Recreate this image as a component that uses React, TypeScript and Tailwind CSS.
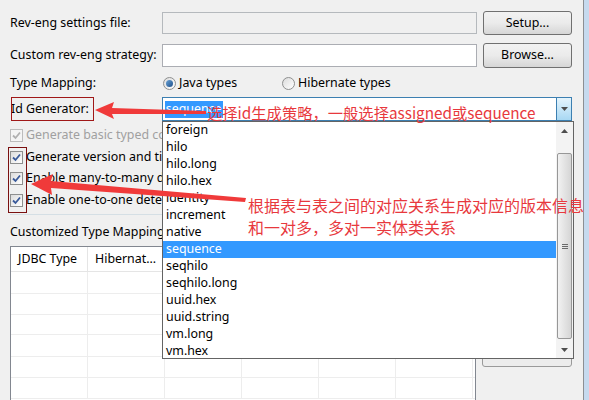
const ids = [
  'foreign',
  'hilo',
  'hilo.long',
  'hilo.hex',
  'identity',
  'increment',
  'native',
  'sequence',
  'seqhilo',
  'seqhilo.long',
  'uuid.hex',
  'uuid.string',
  'vm.long',
  'vm.hex',
]

const font = { fontFamily: '"Noto Sans", "Liberation Sans", sans-serif' }
const cjk = { fontFamily: '"Noto Sans CJK SC", "Noto Sans", sans-serif' }

function Button({ label }: { label?: string }) {
  return (
    <div className="ml-[6px] flex h-full w-[89px] items-center justify-center rounded-[3px] border border-[#707070] bg-gradient-to-b from-[#f2f2f2] via-[#ebebeb] to-[#d6d6d6] text-black">
      {label}
    </div>
  )
}

function Check({ disabled }: { disabled?: boolean }) {
  return (
    <div
      className={
        'flex h-[13px] w-[13px] shrink-0 items-center justify-center border ' +
        (disabled ? 'border-[#bcbcbc] bg-[#f4f4f4]' : 'border-[#8e8f8f] bg-gradient-to-br from-[#dcdcdc] to-white')
      }
    >
      <svg width="9" height="9" viewBox="0 0 9 9">
        <path
          d="M1 4.5 L3.5 7 L8 1.5"
          fill="none"
          stroke={disabled ? '#b0b0b0' : '#3a5a9a'}
          strokeWidth="1.8"
        />
      </svg>
    </div>
  )
}

function Radio({ on }: { on?: boolean }) {
  return (
    <div className="flex h-[13px] w-[13px] items-center justify-center rounded-full border border-[#8e8f8f] bg-gradient-to-br from-[#dcdcdc] to-white">
      {on && <div className="h-[7px] w-[7px] rounded-full bg-gradient-to-br from-[#6ba3d6] to-[#1d4f8a]" />}
    </div>
  )
}

function Arrow({ down }: { down?: boolean }) {
  return (
    <svg width="7" height="4" viewBox="0 0 7 4">
      <path d={down ? 'M0 0 L7 0 L3.5 4 Z' : 'M0 4 L7 4 L3.5 0 Z'} fill="#4d4d4d" />
    </svg>
  )
}

// check rows run under the open list, so clip them at its left edge
function CheckRow({ text, disabled, mt }: { text: string; disabled?: boolean; mt: string }) {
  return (
    <div className={'flex h-[17px] w-[152px] items-center gap-[3px] overflow-hidden whitespace-nowrap ' + mt + (disabled ? ' text-[#a0a0a0]' : '')}>
      <Check disabled={disabled} />
      <span>{text}</span>
    </div>
  )
}

export default function App() {
  return (
    <div className="relative flex h-[400px] w-[589px] overflow-hidden bg-[#f0f0f0] text-[12.4px] text-black" style={font}>
      <div className="flex w-[583px] flex-col pl-[10px] pr-[11px] pt-[11px]">
        <div className="flex h-[24px] items-center">
          <span className="w-[152px]">Rev-eng settings file:</span>
          <div className="h-[22px] w-[315px] border border-[#b5b9bd] bg-[#f0f0f0]" />
          <Button label="Setup..." />
        </div>
        <div className="mt-[8px] flex h-[25px] items-center">
          <span className="w-[152px]">Custom rev-eng strategy:</span>
          <div className="h-[23px] w-[315px] border border-[#abadb3] bg-white" />
          <Button label="Browse..." />
        </div>
        <div className="mt-[7px] flex h-[17px] items-center">
          <span className="w-[153px]">Type Mapping:</span>
          <Radio on />
          <span className="ml-[3px] w-[103px]">Java types</span>
          <Radio />
          <span className="ml-[3px]">Hibernate types</span>
        </div>
        <div className="mt-[5px] flex h-[24px] items-center">
          <span className="w-[152px] pl-[1px]">Id Generator:</span>
          <div className="flex h-[24px] w-[411px] items-center border border-[#3c7fb1] bg-white pl-[2px]">
            <span className="flex h-[17px] items-center bg-[#3399ff] px-[1px] text-white">sequence</span>
            <div className="ml-auto flex h-[22px] w-[15px] items-center justify-center border-l border-[#3c7fb1] bg-gradient-to-b from-[#e5f4fc] to-[#a8d8f3]">
              <Arrow down />
            </div>
          </div>
        </div>
        <div className="mt-[6px] flex flex-col">
          <CheckRow text="Generate basic typed composite ids" disabled mt="" />
          <CheckRow text="Generate version and timestamp tags" mt="mt-[5px]" />
          <CheckRow text="Enable many-to-many detection" mt="mt-[4px]" />
          <CheckRow text="Enable one-to-one detection" mt="mt-[5px]" />
        </div>
        <div className="mt-[5px] h-px bg-[#d5dfe5]" />
        <div className="mt-[9px] flex h-[17px] w-[152px] items-center overflow-hidden whitespace-nowrap">Customized Type Mappings</div>
        <div className="mt-[5px] flex flex-1">
          <div className="flex w-[467px] flex-col border border-b-0 border-[#828790] bg-white">
            <div className="flex h-[25px] border-b border-[#e5e5e5]">
              {['JDBC Type', 'Hibernat...', '', '', '', ''].map((h, i) => (
                <div key={i} className="flex w-[77px] shrink-0 items-center border-r border-[#e5e5e5] pl-[7px]">
                  {h}
                </div>
              ))}
            </div>
            {[22, 21, 20, 22, 21, 21].map((hgt, r) => (
              <div key={r} className="flex border-b border-[#ededed]" style={{ height: hgt }}>
                {[0, 1, 2, 3, 4, 5].map((c) => (
                  <div key={c} className="w-[77px] shrink-0 border-r border-[#ededed]" />
                ))}
              </div>
            ))}
          </div>
          <div className="ml-[6px] mt-[97px] h-[24px] w-[90px] rounded-[3px] border border-[#9a9a9a] bg-[#ececec]" />
        </div>
      </div>
      <div className="w-[6px] border-l border-[#8c8f94] bg-[#c6daef]" />

      {/* open combo list */}
      <div className="absolute left-[162px] top-[121px] flex h-[238px] w-[412px] border border-[#646464] bg-white">
        <div className="flex flex-1 flex-col">
          {ids.map((id) => (
            <div
              key={id}
              className={'flex h-[17px] shrink-0 items-center pl-[3px] ' + (id === 'sequence' ? 'bg-[#3399ff] text-white' : '')}
            >
              {id}
            </div>
          ))}
        </div>
        <div className="flex w-[17px] flex-col bg-[#f3f3f3]">
          <div className="flex h-[17px] items-center justify-center">
            <Arrow />
          </div>
          <div className="mx-[1px] mt-[14px] flex h-[186px] items-center justify-center rounded-[2px] border border-[#979797] bg-gradient-to-r from-[#f2f2f2] to-[#d5d5d5]">
            <div className="flex flex-col gap-[1px]">
              <div className="h-px w-[6px] bg-[#6a6a6a]" />
              <div className="h-px w-[6px] bg-[#6a6a6a]" />
              <div className="h-px w-[6px] bg-[#6a6a6a]" />
            </div>
          </div>
          <div className="mt-auto flex h-[17px] items-center justify-center">
            <Arrow down />
          </div>
        </div>
      </div>

      {/* annotations */}
      <div className="absolute left-[11px] top-[97px] h-[24px] w-[83px] border border-[#a01818]" />
      <div className="absolute left-[8px] top-[147px] h-[66px] w-[19px] border border-[#7a1010]" />
      <svg className="absolute left-0 top-0" width="589" height="400" viewBox="0 0 589 400">
        <polygon points="95,110 114,102 112,108 206,111 206,114 112,114 114,119" fill="#f03a3a" />
        <polygon points="31,184 53,174 51,181 246,198 245,202 51,188 52,195" fill="#f03a3a" />
      </svg>
      <div className="absolute left-[207px] top-[102px] whitespace-nowrap text-[15.3px] leading-[20px] text-[#e8383d]" style={cjk}>
        选择id生成策略，一般选择assigned或sequence
      </div>
      <div className="absolute left-[248px] top-[194px] whitespace-nowrap text-[16px] leading-[22px] text-[#e8383d]" style={cjk}>
        <div>根据表与表之间的对应关系生成对应的版本信息</div>
        <div>和一对多，多对一实体类关系</div>
      </div>
    </div>
  )
}
